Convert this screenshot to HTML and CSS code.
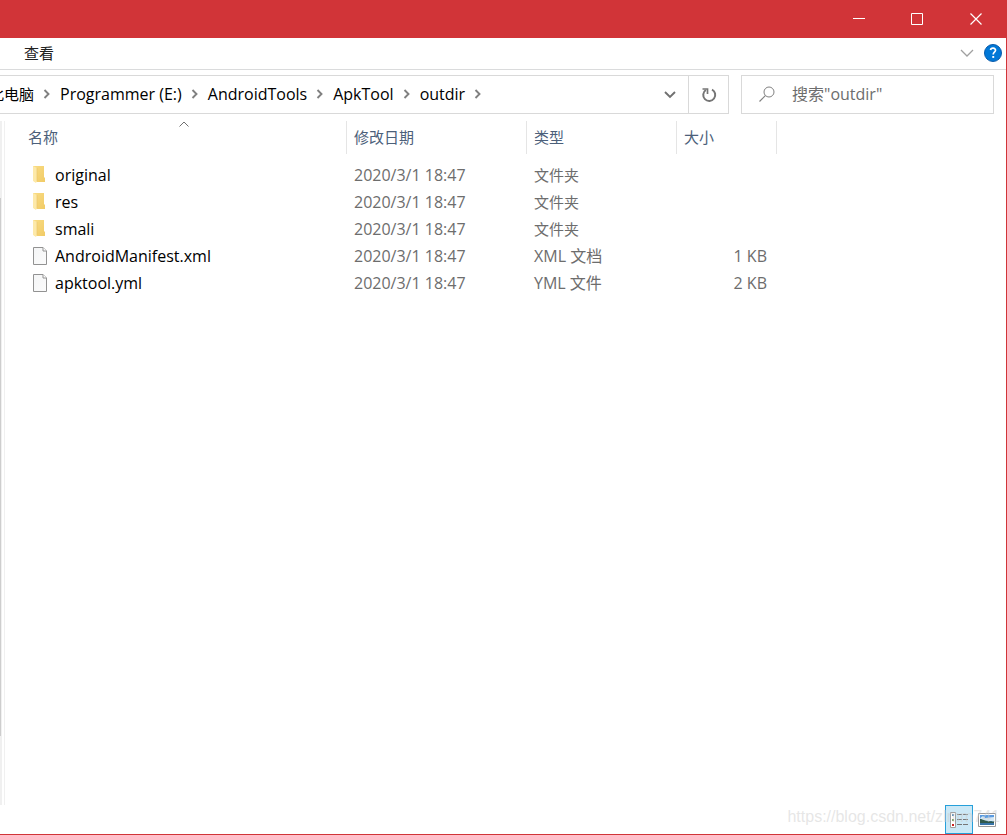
FILE: index.html
```
<!DOCTYPE html>
<html lang="zh-CN">
<head>
<meta charset="utf-8">
<meta name="viewport" content="width=device-width, initial-scale=1">
<title>outdir</title>
<link rel="stylesheet" href="styles.css">
</head>
<body>
<svg class="defs" aria-hidden="true">
  <defs>
    <linearGradient id="folder-back" x1="0" y1="0" x2="1" y2="1"><stop offset="0" stop-color="#f9dc84"/><stop offset="1" stop-color="#f1cb66"/></linearGradient>
    <linearGradient id="page-fill" x1="0" y1="0" x2="1" y2="1"><stop offset="0" stop-color="#f4f5f6"/><stop offset="1" stop-color="#fbfbfb"/></linearGradient>
  </defs>
  <symbol id="chevron" viewBox="0 0 8 10"><path d="M1.500 1 5.500 5 1.500 9" fill="none" stroke="#808080" stroke-width="1.900"/></symbol>
  <symbol id="folder" viewBox="0 0 16 18"><path d="M1 0h11v11l1 1v4H3L1 14z" fill="url(#folder-back)"/><path d="M1 0l4 2v13l-1 2-3-2z" fill="#fde9a9"/><path d="M5 2v13" stroke="#eac469" stroke-width=".6"/></symbol>
  <symbol id="page" viewBox="0 0 16 18"><path d="M1.500.5h9.500l3.500 3.500v13.500h-13z" fill="url(#page-fill)" stroke="#929292"/><path d="M11 .5V4h3.500" fill="#fff" stroke="#929292"/></symbol>
</svg>
<div class="window">
  <header class="titlebar">
    <button class="caption" aria-label="最小化"><svg width="12" height="12"><path d="M0 5.500h12" stroke="#fff"/></svg></button>
    <button class="caption" aria-label="最大化"><svg width="12" height="12"><path d="M.5.5h11v11H.5z" fill="none" stroke="#fff"/></svg></button>
    <button class="caption" aria-label="关闭"><svg width="12" height="12"><path d="M.5.5l11 11M11.500.5l-11 11" stroke="#fff" stroke-width="1.200"/></svg></button>
  </header>
  <nav class="ribbon">
    <button class="tab">查看</button>
    <button class="expand" aria-label="展开功能区"><svg width="14" height="8"><path d="M1 1l6 6 6-6" fill="none" stroke="#a0a0a0" stroke-width="1.300"/></svg></button>
    <button class="help" aria-label="帮助"><svg width="18" height="18"><circle cx="9" cy="9" r="8.500" fill="#0078d7" stroke="#0b5cab"/><path d="M6.500 6c.4-2.600 5.300-2.400 5 .5-.2 1.700-2.300 1.900-2.300 4" fill="none" stroke="#fff" stroke-width="1.700"/><path d="M8.300 12h1.900v1.900H8.300z" fill="#fff"/></svg></button>
  </nav>
  <div class="location">
    <div class="address">
      <ol class="crumbs">
        <li><button class="cjk">此电脑</button><svg class="sep"><use href="#chevron"/></svg></li>
        <li><button>Programmer (E:)</button><svg class="sep"><use href="#chevron"/></svg></li>
        <li><button>AndroidTools</button><svg class="sep"><use href="#chevron"/></svg></li>
        <li><button>ApkTool</button><svg class="sep"><use href="#chevron"/></svg></li>
        <li><button>outdir</button><svg class="sep"><use href="#chevron"/></svg></li>
      </ol>
      <button class="history" aria-label="以前的位置"><svg width="12" height="8"><path d="M1 1l5 5 5-5" fill="none" stroke="#707070" stroke-width="1.900"/></svg></button>
      <button class="refresh" aria-label="刷新"><svg width="16" height="16"><path d="M4.800 3A6 6 0 1 0 11 2.600" fill="none" stroke="#757575" stroke-width="2"/><path d="M1.500 2h5v5" fill="none" stroke="#757575" stroke-width="1.700"/></svg></button>
    </div>
    <label class="search">
      <svg width="16" height="16" aria-hidden="true"><circle cx="10" cy="6" r="5" fill="none" stroke="#808080"/><path d="M6.300 9.700.5 15.500" stroke="#808080" stroke-width="1.200"/></svg>
      <input type="search" aria-label="搜索" placeholder='搜索"outdir"'>
    </label>
  </div>
  <main class="content">
    <div class="tree-edge"><div class="thumb"></div></div>
    <div class="list">
      <table>
        <colgroup><col class="c-name"><col class="c-date"><col class="c-type"><col class="c-size"></colgroup>
        <thead>
          <tr><th scope="col">名称<svg class="sort" width="10" height="6"><path d="M.5 5.500 5 1l4.500 4.500" fill="none" stroke="#707070"/></svg></th><th scope="col">修改日期</th><th scope="col">类型</th><th scope="col">大小</th></tr>
        </thead>
        <tbody>
          <tr><td><span class="file"><svg><use href="#folder"/></svg>original</span></td><td>2020/3/1 18:47</td><td class="cjk">文件夹</td><td></td></tr>
          <tr><td><span class="file"><svg><use href="#folder"/></svg>res</span></td><td>2020/3/1 18:47</td><td class="cjk">文件夹</td><td></td></tr>
          <tr><td><span class="file"><svg><use href="#folder"/></svg>smali</span></td><td>2020/3/1 18:47</td><td class="cjk">文件夹</td><td></td></tr>
          <tr><td><span class="file"><svg><use href="#page"/></svg>AndroidManifest.xml</span></td><td>2020/3/1 18:47</td><td>XML 文档</td><td>1 KB</td></tr>
          <tr><td><span class="file"><svg><use href="#page"/></svg>apktool.yml</span></td><td>2020/3/1 18:47</td><td>YML 文件</td><td>2 KB</td></tr>
        </tbody>
      </table>
    </div>
  </main>
  <footer class="status">
    <button class="view selected" aria-label="详细信息"><svg width="18" height="16"><path d="M.5.5h5v15h-5z" fill="#fff" stroke="#a0a0a0"/><path d="M2 2h2v2H2z" fill="#5b87b5"/><path d="M2 7h2v2H2z" fill="#7c9b49"/><path d="M2 12h2v2H2z" fill="#c22"/><path d="M7 2.500h5M13 2.500h5M7 7.500h5M13 7.500h5M7 12.500h5M13 12.500h5" stroke="#777"/></svg></button>
    <button class="view" aria-label="大图标"><svg width="18" height="14"><path d="M.5.5h17v13H.5z" fill="#fff" stroke="#999"/><path d="M2 2h14v10H2z" fill="#5b9be0"/><path d="M2 6c2-4 4-3 5-1l9-1v4H2z" fill="#d5e9f6"/><path d="M2 6c3 0 5 3 14 2v2H2z" fill="#31594c"/><path d="M2 10h14v2H2z" fill="#3874a8"/></svg></button>
    <span class="watermark">https://blog.csdn.net/zlmm741</span>
  </footer>
</div>
</body>
</html>
```
FILE: styles.css
```
* { box-sizing: border-box; }
body {
  margin: 0;
  background: #fff;
  color: #000;
  font: 16px/20px "Open Sans", "Noto Sans CJK SC", sans-serif;
}
button {
  display: flex;
  align-items: center;
  justify-content: center;
  padding: 0;
  border: 0;
  background: none;
  color: inherit;
  font: inherit;
  white-space: nowrap;
}
svg { display: block; flex: none; }
.defs { position: absolute; width: 0; height: 0; }
.cjk, .tab, th { font-size: 15px; }
.window {
  display: flex;
  flex-direction: column;
  min-height: 100vh;
  border: solid #d13438;
  border-width: 0 1px 1px 0;
}
.titlebar {
  display: flex;
  justify-content: flex-end;
  height: 38px;
  margin-right: -1px;
  padding-right: 2px;
  background: #d13438;
}
.caption { width: 58px; }
.caption:not(:last-child) { padding-right: 2px; }
.ribbon {
  display: flex;
  align-items: center;
  height: 32px;
  padding: 0 4px 2px 24px;
  border-bottom: 1px solid #dadbdc;
}
.tab { margin-right: auto; color: #222; }
.expand { width: 34px; height: 24px; }
.location {
  display: flex;
  gap: 12px;
  padding: 5px 12px 0 0;
}
.address {
  display: flex;
  flex: 1;
  min-width: 0;
  height: 39px;
  border: 1px solid #d9d9d9;
  border-left: 0;
}
.crumbs {
  display: flex;
  flex: 1;
  min-width: 0;
  margin: 0 0 0 -11px;
  padding: 0 0 2px;
  list-style: none;
}
.crumbs li { display: flex; align-items: center; }
.sep { width: 8px; height: 10px; margin: 0 9px; }
.history { width: 37px; }
.refresh { width: 40px; border-left: 1px solid #d9d9d9; }
.search {
  display: flex;
  align-items: center;
  gap: 17px;
  flex: 0 1 253px;
  min-width: 0;
  height: 39px;
  padding: 0 17px 2px;
  border: 1px solid #d9d9d9;
}
.search input {
  flex: 1;
  min-width: 0;
  padding: 0;
  border: 0;
  outline: 0;
  background: none;
  font: inherit;
}
.search input::placeholder { color: #6d6d6d; opacity: 1; }
.content {
  display: flex;
  flex: 1;
  padding-top: 7px;
}
.tree-edge {
  width: 2px;
  padding: 77px 1px 69px 0;
  background: #f0f0f0;
}
.thumb { height: 100%; background: #cdcdcd; }
.list {
  flex: 1;
  margin-left: 2px;
  border-left: 1px solid #f0f0f0;
}
table {
  table-layout: fixed;
  width: 772px;
  border-collapse: separate;
  border-spacing: 0;
}
.c-name { width: 342px; }
.c-date { width: 180px; }
.c-type { width: 150px; }
.c-size { width: 100px; }
th {
  position: relative;
  height: 33px;
  padding: 0 7px 2px;
  border-right: 1px solid #e5e5e5;
  color: #4c607a;
  font-weight: 400;
  text-align: left;
}
th:first-child { padding-left: 23px; }
.sort { position: absolute; top: 0; left: 174px; }
tbody::before { content: ""; display: block; height: 8px; }
td {
  height: 27px;
  padding: 0 7px 2px;
  color: #6d6d6d;
}
td:first-child { padding-left: 27px; color: #000; }
td:last-child { padding-right: 10px; text-align: right; }
.file { display: flex; align-items: center; gap: 7px; }
.file svg { width: 16px; height: 18px; }
.status {
  position: relative;
  display: flex;
  justify-content: flex-end;
  height: 29px;
  padding-right: 5px;
}
.view { width: 28px; border: 1px solid transparent; }
.selected { border-color: #26a0da; background: #cbe8f6; }
.watermark {
  position: absolute;
  right: 6px;
  top: 2px;
  color: rgba(205, 205, 205, .5);
  font: 16px/20px "Liberation Sans", Arial, sans-serif;
  pointer-events: none;
}
```
